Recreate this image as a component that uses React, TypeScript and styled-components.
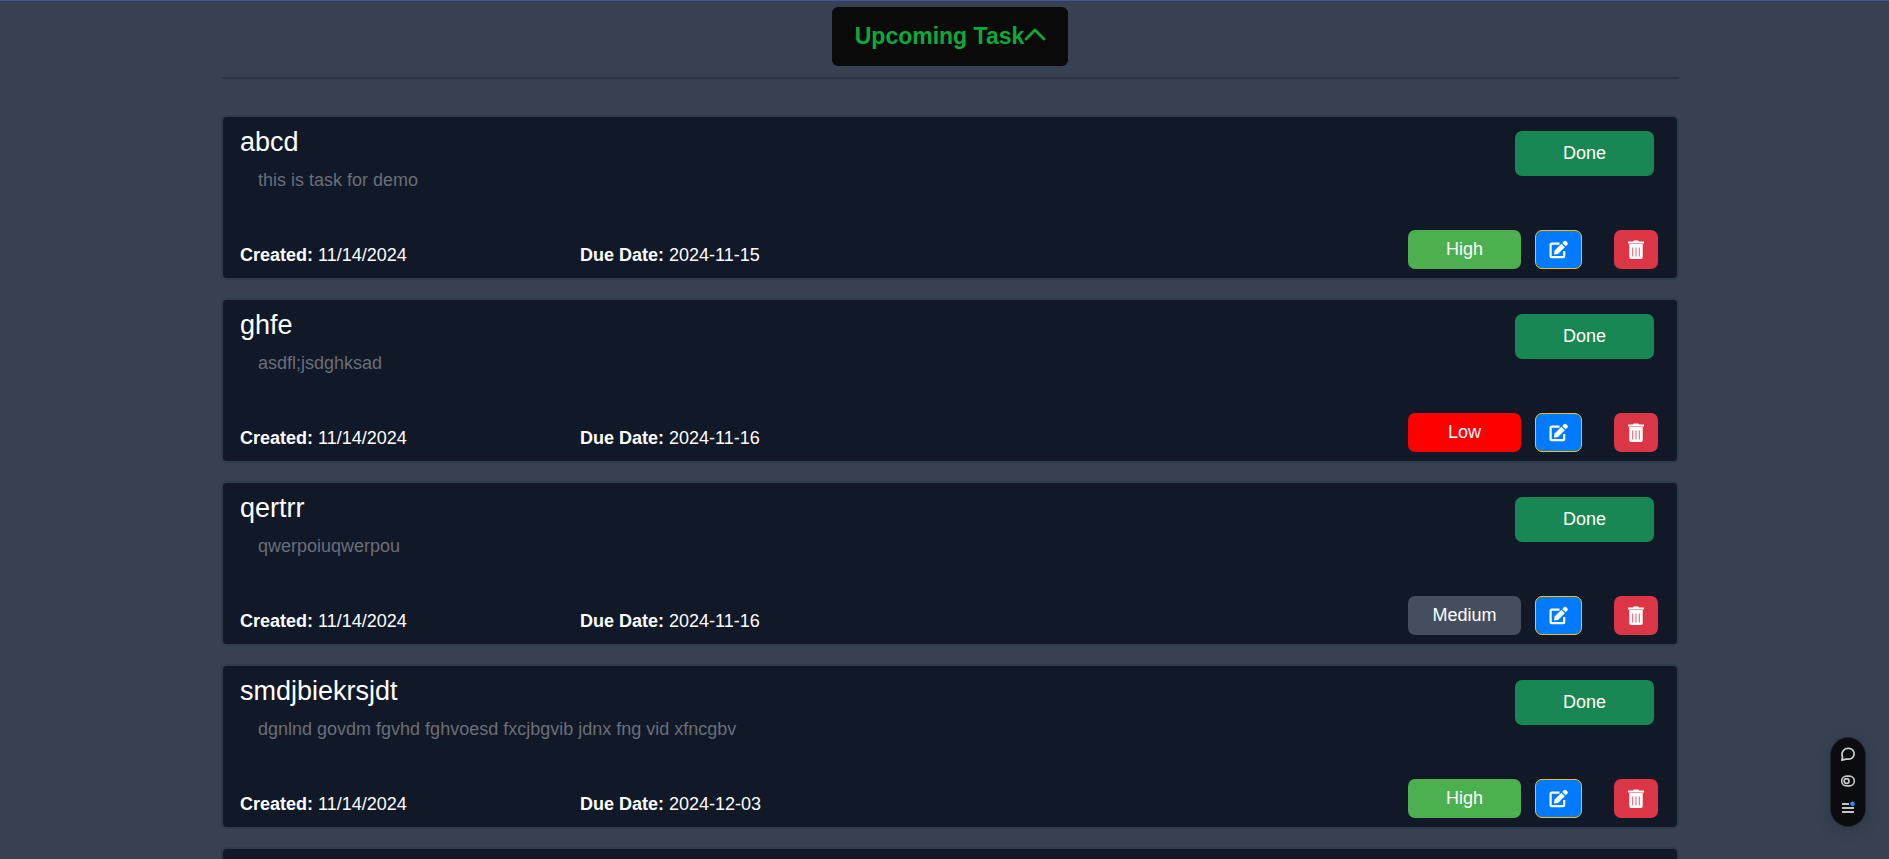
import React from "react";
import styled, { createGlobalStyle } from "styled-components";

const GlobalStyle = createGlobalStyle`
  * { box-sizing: border-box; }
  body {
    margin: 0;
    overflow: hidden;
    background: #384152;
    font-family: "Liberation Sans", Arial, sans-serif;
    font-size: 18px;
    line-height: 27px;
    color: #fff;
  }
  button { font: inherit; color: inherit; cursor: pointer; }
`;

const Page = styled.main`
  height: 100vh;
  overflow: hidden;
  border-top: 1px solid #4053a6;
  padding: 6px 210px 0 221px;
`;

const Header = styled.header`
  display: flex;
  justify-content: center;
  padding-bottom: 11px;
  margin-bottom: 36px;
  border-bottom: 2px solid #2b3442;
`;

const SectionToggle = styled.button`
  display: flex;
  align-items: center;
  height: 59px;
  padding: 0 22px 0 23px;
  border: 0;
  border-radius: 6px;
  background: #0a0a0a;
  color: #0caa38;
  font-size: 23px;
  font-weight: 700;
`;

const TaskList = styled.ul`
  display: flex;
  flex-direction: column;
  gap: 18px;
  margin: 0;
  padding: 0;
  list-style: none;
`;

const Card = styled.li`
  display: flex;
  justify-content: space-between;
  min-height: 165px;
  border: 2px solid #2d3b4e;
  border-radius: 6px;
  background: #111827;
`;

const Details = styled.div`
  display: flex;
  flex-direction: column;
  padding: 9px 0 9px 17px;
`;

const Title = styled.h2`
  margin: 0 0 8px;
  font-size: 27px;
  font-weight: 400;
  line-height: 33px;
`;

const Description = styled.p`
  margin: 0 0 0 18px;
  color: #6a6f7a;
`;

const Dates = styled.div`
  display: grid;
  grid-template-columns: 340px auto;
  margin-top: auto;
`;

const Actions = styled.div`
  display: flex;
  flex-direction: column;
  align-items: flex-end;
  justify-content: space-between;
  padding: 14px 19px 9px 0;
`;

const DoneButton = styled.button`
  width: 139px;
  height: 45px;
  margin-right: 4px;
  border: 0;
  border-radius: 7px;
  background: #198754;
`;

const ActionRow = styled.div`
  display: flex;
  height: 39px;
`;

const levelColors = { High: "#4caf50", Low: "#ff0000", Medium: "#454e5e" };
type Level = keyof typeof levelColors;

const PriorityButton = styled.button<{ $level: Level }>`
  width: 113px;
  margin-right: 14px;
  border: 0;
  border-radius: 7px;
  background: ${(p) => levelColors[p.$level]};
`;

const IconButton = styled.button<{ $kind: "edit" | "delete" }>`
  display: flex;
  align-items: center;
  justify-content: center;
  width: ${(p) => (p.$kind === "edit" ? 47 : 44)}px;
  margin-right: ${(p) => (p.$kind === "edit" ? 32 : 0)}px;
  padding: 0;
  border: ${(p) => (p.$kind === "edit" ? "1px solid #ffc107" : "0")};
  border-radius: 7px;
  background: ${(p) => (p.$kind === "edit" ? "#007bff" : "#dc3545")};
`;

const Toolbar = styled.aside`
  position: fixed;
  right: 23px;
  bottom: 32px;
  display: flex;
  flex-direction: column;
  align-items: center;
  justify-content: space-between;
  width: 36px;
  height: 90px;
  padding: 7px 0 9px;
  border: 1px solid #23272e;
  border-radius: 18px;
  background: #0b0c0f;
  box-shadow: 0 4px 16px rgba(0, 0, 0, 0.14);
`;

const ToolButton = styled.button`
  display: flex;
  padding: 0;
  border: 0;
  background: none;
`;

interface Task {
  title: string;
  description: string;
  due: string;
  level: Level;
}

const tasks: Task[] = [
  { title: "abcd", description: "this is task for demo", due: "2024-11-15", level: "High" },
  { title: "ghfe", description: "asdfl;jsdghksad", due: "2024-11-16", level: "Low" },
  { title: "qertrr", description: "qwerpoiuqwerpou", due: "2024-11-16", level: "Medium" },
  { title: "smdjbiekrsjdt", description: "dgnlnd govdm fgvhd fghvoesd fxcjbgvib jdnx fng vid xfncgbv", due: "2024-12-03", level: "High" },
];

const EditIcon = () => (
  <svg width="20" height="20" viewBox="0 0 20 20" fill="currentColor">
    <path d="M10.5 3.7H2.6a1 1 0 0 0-1 1v11.5a1 1 0 0 0 1 1h11.6a1 1 0 0 0 1-1V11" fill="none" stroke="currentColor" strokeWidth="2.2" />
    <path d="M5 14.6 5.6 10.6 12.4 3.8 15.8 7.2 9 14Z" />
    <path d="m13.3 2.9 1.6-1.6a1.7 1.7 0 0 1 2.4 0l1 1a1.7 1.7 0 0 1 0 2.4l-1.6 1.6Z" />
  </svg>
);

const TrashIcon = () => (
  <svg width="18" height="20" viewBox="0 0 18 20" fill="currentColor">
    <path d="M6 1.4 6.6.5h4.8l.6.9h5v2.1H1V1.4Z" />
    <path d="M2.3 4.1h13.4v13.1a1.7 1.7 0 0 1-1.7 1.7H4a1.7 1.7 0 0 1-1.7-1.7Z" />
    <path d="M5.7 7.5v9M9 7.5v9M12.3 7.5v9" stroke="#dc3545" strokeWidth=".8" />
  </svg>
);

function TaskCard({ task }: { task: Task }) {
  return (
    <Card>
      <Details>
        <Title>{task.title}</Title>
        <Description>{task.description}</Description>
        <Dates>
          <span><strong>Created:</strong> 11/14/2024</span>
          <span><strong>Due Date:</strong> {task.due}</span>
        </Dates>
      </Details>
      <Actions>
        <DoneButton>Done</DoneButton>
        <ActionRow>
          <PriorityButton $level={task.level}>{task.level}</PriorityButton>
          <IconButton $kind="edit" aria-label="Edit task"><EditIcon /></IconButton>
          <IconButton $kind="delete" aria-label="Delete task"><TrashIcon /></IconButton>
        </ActionRow>
      </Actions>
    </Card>
  );
}

export default function App() {
  return (
    <>
      <GlobalStyle />
      <Page>
        <Header>
          <SectionToggle aria-expanded="true">
            Upcoming Task
            <svg width="22" height="22" viewBox="0 0 22 22" fill="none" stroke="currentColor" strokeWidth="2.8" strokeLinecap="round" strokeLinejoin="round">
              <path d="M2 13 11 4l9 9" />
            </svg>
          </SectionToggle>
        </Header>
        <TaskList>
          {tasks.map((task) => <TaskCard key={task.title} task={task} />)}
          <Card />
        </TaskList>
      </Page>
      <Toolbar aria-label="Page tools">
        <ToolButton aria-label="Comments">
          <svg width="18" height="18" viewBox="0 0 18 18" fill="none" stroke="#cfcfcf" strokeWidth="1.7" strokeLinejoin="round">
            <path d="M2.8 15.2 3.6 12.2A5.6 5.6 0 0 1 3 9.2 5.8 5.8 0 0 1 9 3.4h.6a5.5 5.5 0 0 1 5.6 5.4 5.4 5.4 0 0 1-5.6 5.4H7Z" />
          </svg>
        </ToolButton>
        <ToolButton aria-label="View options">
          <svg width="18" height="18" viewBox="0 0 18 18" fill="none" stroke="#c4c4c4" strokeWidth="1.7">
            <rect x="2.7" y="4.2" width="12.6" height="9.6" rx="4.8" />
            <circle cx="7.6" cy="9" r="2.4" />
          </svg>
        </ToolButton>
        <ToolButton aria-label="Menu">
          <svg width="18" height="18" viewBox="0 0 18 18" fill="none" stroke="#c4c4c4" strokeWidth="1.8">
            <path d="M3 5h7M3 9h12M3 13h12" />
            <circle cx="13.5" cy="4.8" r="2.3" fill="#2f8cf0" stroke="none" />
          </svg>
        </ToolButton>
      </Toolbar>
    </>
  );
}
